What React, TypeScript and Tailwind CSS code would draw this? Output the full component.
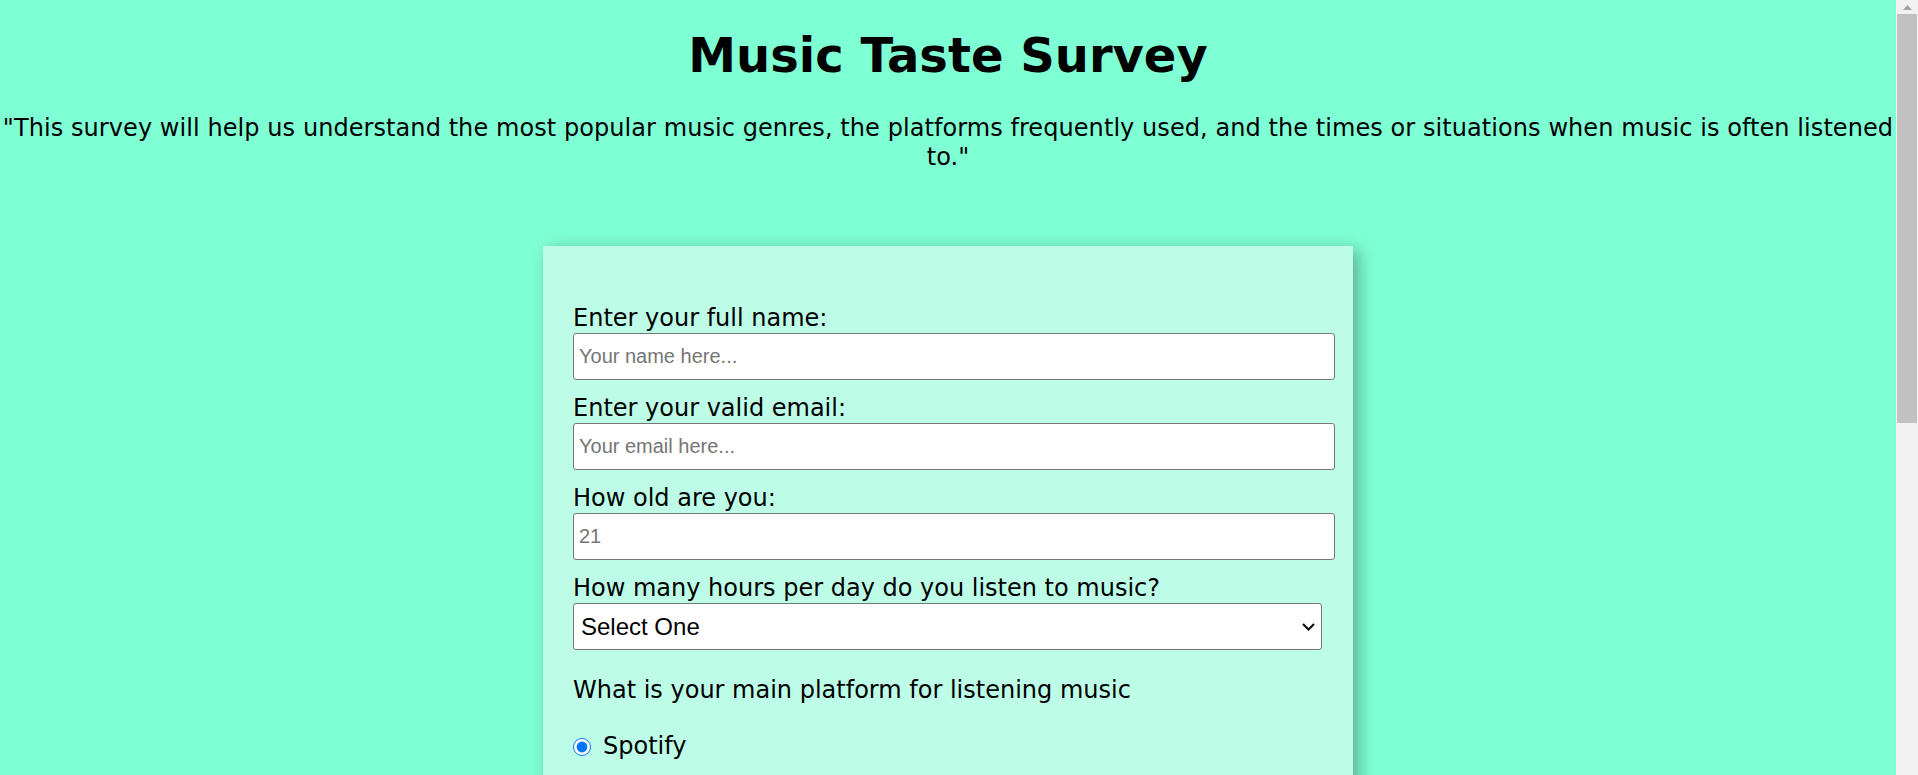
import React from "react";

const platforms = ["Spotify", "Apple Music", "YouTube Music", "SoundCloud", "Amazon Music", "Other"];
const genres = ["Pop", "Rock", "Hip-Hop", "Jazz", "Classical", "Electronic", "Country", "R&B"];

const sansInput = { fontFamily: '"Liberation Sans", Arial, sans-serif' };

function Field({ label, placeholder, type = "text" }: { label: string; placeholder: string; type?: string }) {
  return (
    <div className="mb-[14px]">
      <label className="block h-[29px]">{label}</label>
      <input
        type={type}
        placeholder={placeholder}
        className="block w-[762px] h-[47px] bg-white border border-[#767676] rounded-[3px] pl-[5px] text-[20px] placeholder:text-[#757575] outline-none"
        style={sansInput}
      />
    </div>
  );
}

function Select({ options }: { options: string[] }) {
  return (
    <div className="relative w-[749px]">
      <select
        className="block w-[749px] h-[47px] appearance-none bg-white border border-[#767676] rounded-[3px] pl-[7px] text-[24px] text-black outline-none"
        style={sansInput}
        defaultValue=""
      >
        <option value="">Select One</option>
        {options.map((o) => (
          <option key={o}>{o}</option>
        ))}
      </select>
      <svg
        className="absolute right-[7px] top-[20px] pointer-events-none"
        width="13"
        height="8"
        viewBox="0 0 13 8"
      >
        <polyline points="1,1 6.5,6.5 12,1" fill="none" stroke="#111" strokeWidth="2.2" />
      </svg>
    </div>
  );
}

export default function App() {
  return (
    <div
      className="h-[775px] overflow-hidden flex bg-[#7fffd4] text-black text-[24px] leading-[29px]"
      style={{ fontFamily: '"DejaVu Sans", Verdana, sans-serif' }}
    >
      <main className="flex-1 min-w-0 pb-[90px]">
        <h1 className="text-[48px] leading-[58px] font-bold text-center pt-[26px]">Music Taste Survey</h1>
        <p className="text-center mt-[30px] tracking-[0.07px]">
          "This survey will help us understand the most popular music genres, the platforms frequently used, and the times or situations when music is often listened to."
        </p>
        <form className="mx-auto mt-[74px] w-[810px] bg-[#bdfde7] pl-[30px] pr-[18px] pt-[58px] pb-[60px] shadow-[6px_4px_16px_rgba(0,0,0,0.3)]">
          <Field label="Enter your full name:" placeholder="Your name here..." />
          <Field label="Enter your valid email:" placeholder="Your email here..." type="email" />
          <Field label="How old are you:" placeholder="21" type="number" />
          <label className="block h-[29px]">How many hours per day do you listen to music?</label>
          <Select options={["Less than 1 hour", "1-3 hours", "3-5 hours", "More than 5 hours"]} />

          <p className="mt-[26px] h-[29px]">What is your main platform for listening music</p>
          <div className="mt-[27px] flex flex-col gap-[16px]">
            {platforms.map((p, i) => (
              <label key={p} className="flex items-center h-[29px]">
                <input
                  type="radio"
                  name="platform"
                  defaultChecked={i === 0}
                  className="m-0 w-[18px] h-[18px] accent-[#0075ff]"
                />
                <span className="ml-[12px]">{p}</span>
              </label>
            ))}
          </div>

          <p className="mt-[30px] h-[29px]">Which music genres do you enjoy? (Check all that apply)</p>
          <div className="mt-[27px] flex flex-col gap-[12px]">
            {genres.map((g) => (
              <label key={g} className="flex items-center h-[29px]">
                <input type="checkbox" className="m-0 w-[18px] h-[18px] accent-[#0075ff]" />
                <span className="ml-[12px]">{g}</span>
              </label>
            ))}
          </div>

          <label className="block mt-[30px] h-[29px]">When do you usually listen to music?</label>
          <Select options={["While working", "While commuting", "While exercising", "Before sleeping"]} />

          <label className="block mt-[26px] h-[29px]">Any additional comments?</label>
          <textarea
            placeholder="Write your comments here..."
            className="block w-[762px] h-[200px] bg-white border border-[#767676] rounded-[3px] p-[5px] text-[20px] placeholder:text-[#757575] resize-none outline-none"
            style={sansInput}
          />

          <button
            type="button"
            className="block mt-[30px] w-[762px] h-[50px] bg-[#2e8b57] text-white rounded-[3px] text-[24px]"
          >
            Submit
          </button>
        </form>
      </main>

      <div className="w-[22px] shrink-0 h-[775px] bg-[#f1f1f1] flex flex-col items-center">
        <div className="h-[14px] w-full flex items-center justify-center">
          <svg width="9" height="5" viewBox="0 0 9 5">
            <polygon points="0,5 4.5,0 9,5" fill="#a3a3a3" />
          </svg>
        </div>
        <div className="w-[20px] h-[409px] bg-[#c1c1c1]" />
      </div>
    </div>
  );
}
